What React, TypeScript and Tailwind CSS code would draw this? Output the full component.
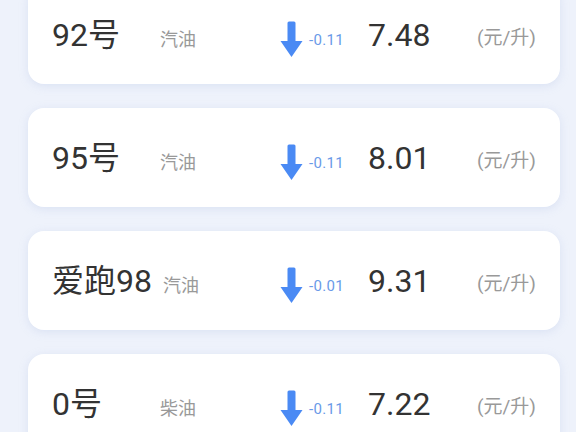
import React from 'react';

interface OilPrice {
  name: string;
  kind: string;
  change: string;
  price: string;
}

const prices: OilPrice[] = [
  { name: '92号', kind: '汽油', change: '-0.11', price: '7.48' },
  { name: '95号', kind: '汽油', change: '-0.11', price: '8.01' },
  { name: '爱跑98', kind: '汽油', change: '-0.01', price: '9.31' },
  { name: '0号', kind: '柴油', change: '-0.11', price: '7.22' },
];

const DownArrow = () => (
  <svg width="23" height="36" viewBox="0 0 23 36" className="shrink-0">
    <path d="M7.5 2a1.5 1.5 0 0 1 1.5-1.5h5A1.5 1.5 0 0 1 15.5 2V20h7L11.5 36 0.5 20h7z" fill="#4a8af4" />
  </svg>
);

const PriceCard: React.FC<{ item: OilPrice }> = ({ item }) => (
  <div className="flex h-[99px] items-center rounded-2xl bg-white pl-[24px] shadow-[0_2px_8px_rgba(180,195,230,0.35)]">
    <div className="flex w-[228px] items-baseline">
      <span className="min-w-[97px] text-[32px] leading-none text-[#333333]">{item.name}</span>
      <span className="ml-[11px] text-[18px] leading-none text-[#999999]">{item.kind}</span>
    </div>
    <div className="flex w-[88px] items-center">
      <div className="mt-[8px]">
        <DownArrow />
      </div>
      <span className="ml-[6px] mt-[12px] text-[15px] leading-none tracking-[0.3px] text-[#6a9ae8]">
        {item.change}
      </span>
    </div>
    <span className="w-[109px] text-[32px] leading-none text-[#333333]">{item.price}</span>
    <span className="mt-[6px] text-[19px] leading-none text-[#999999]">(元/升)</span>
  </div>
);

export default function App() {
  return (
    <div
      className="h-[432px] w-[576px] overflow-hidden bg-[#eef2fb]"
      style={{ fontFamily: 'Roboto, "Noto Sans CJK SC", sans-serif' }}
    >
      <div className="-mt-[15px] flex flex-col gap-[24px] px-[28px] pr-[16px]">
        {prices.map((p) => (
          <PriceCard key={p.name} item={p} />
        ))}
      </div>
    </div>
  );
}
